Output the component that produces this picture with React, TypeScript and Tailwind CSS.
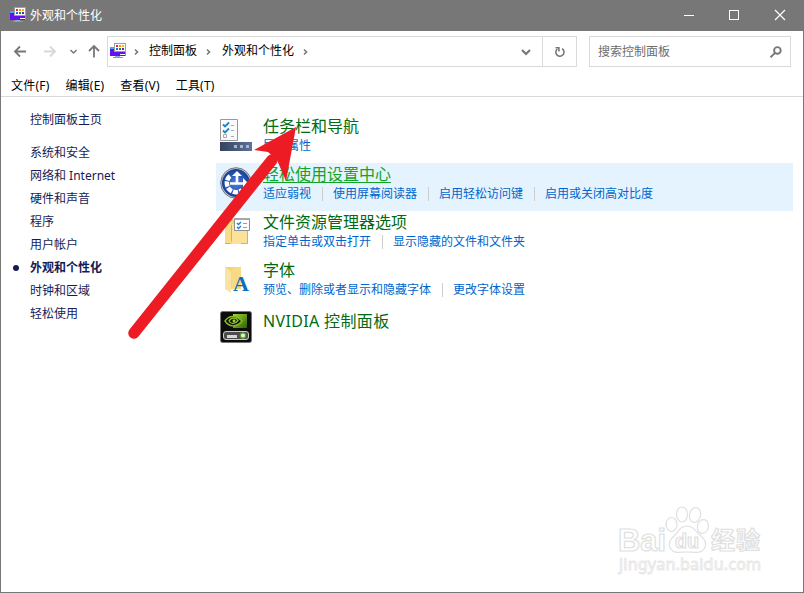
import React from 'react';

const sans = "font-['Noto_Sans','Noto_Sans_CJK_SC',sans-serif]";

function PanelIcon() {
  return (
    <svg width="16" height="16" viewBox="0 0 16 16" shapeRendering="crispEdges" className="shrink-0">
      <path d="M0 4h16v9H0z" fill="#3dabf5" />
      <path d="M0 6h3l3 3h9v4H0z" fill="#6411ee" />
      <path d="M10 11h5v1h-5z" fill="#fff" />
      <path d="M5 13h5v1H5z" fill="#7fb6dc" />
      <path d="M3 14h10v1H3z" fill="#8b9aa8" />
      <path d="M4 0h12v9H4z" fill="#a0a0a0" />
      <path d="M5 1h10v7H5z" fill="#fff" />
      <path d="M6 2h2v2H6z" fill="#f1262f" />
      <path d="M9 2h2v2H9z" fill="#ff8d00" />
      <path d="M12 2h2v2h-2z" fill="#efb900" />
      <path d="M6 5h2v2H6z" fill="#1679d4" />
      <path d="M9 5h2v2H9z" fill="#178d37" />
      <path d="M12 5h2v2h-2z" fill="#7318c9" />
    </svg>
  );
}

function Chevron({ down = false, size = 6, width = 1.6 }: { down?: boolean; size?: number; width?: number }) {
  return (
    <svg width={size} height={size} viewBox="0 0 6 6" fill="none" stroke="#777" strokeWidth={width} className="shrink-0 overflow-visible">
      <path d={down ? 'M0 1.5 3 4.5 6 1.5' : 'M1 0.5 3.5 3 1 5.5'} />
    </svg>
  );
}

function TitleBar() {
  return (
    <header className="flex h-[30px] items-center bg-[#777] pl-[9px] text-white">
      <span className="-mt-[2px]"><PanelIcon /></span>
      <h1 className="ml-[4px] grow text-[12px] leading-[18px]">外观和个性化</h1>
      <svg width="120" height="30" viewBox="0 0 120 30" fill="none" stroke="#fff" strokeWidth="1">
        <path d="M1 14.5h10M46.5 9.5h9v9h-9z" shapeRendering="crispEdges" />
        <path d="m92 9 10 10m0-10-10 10" strokeWidth="1.200" />
      </svg>
    </header>
  );
}

function Toolbar() {
  return (
    <div className="flex h-[41px] items-center text-[12px] leading-[18px]">
      <svg width="106" height="41" viewBox="0 0 106 41" fill="none" stroke="#777" strokeWidth="1.8">
        <path d="M25 20.500H14m5-5-5 5 5 5" />
        <path d="M43 20.500h11m-5-5 5 5-5 5" stroke="#d8d8d8" />
        <path d="m69.500 19 3 3 3-3" strokeWidth="1.500" />
        <path d="M93 26.500V15m-5 5 5-5 5 5" />
      </svg>
      <div className="flex h-[31px] w-[470px] items-center border border-[#d9d9d9] pl-[2px]">
        <span className="-mt-[2px]"><PanelIcon /></span>
        <span className="ml-[8px] flex"><Chevron /></span>
        <span className="ml-[9px] mt-[-2px] w-[48px] whitespace-nowrap">控制面板</span>
        <span className="ml-[9px] flex"><Chevron /></span>
        <span className="ml-[10px] mt-[-2px] w-[72px] whitespace-nowrap">外观和个性化</span>
        <span className="ml-[9px] flex grow"><Chevron /></span>
        <span className="mr-[12px] flex"><Chevron down size={8} width={1.6} /></span>
        <button className="flex h-[29px] w-[34px] items-center justify-center border-l border-[#d9d9d9]">
          <svg width="12" height="12" viewBox="0 0 12 12" fill="none" stroke="#777" strokeWidth="1.600">
            <path d="M8 2.600A4.100 4.100 0 1 1 3.300 3" />
            <path d="M1.500 1.800h3.400V5.500" />
          </svg>
        </button>
      </div>
      <div className="ml-[12px] flex h-[31px] w-[202px] items-center justify-between border border-[#d9d9d9] pl-[8px] pr-[8px] text-[#6d6d6d]">
        搜索控制面板
        <svg width="12" height="12" viewBox="0 0 12 12" fill="none" stroke="#777" strokeWidth="1.900">
          <circle cx="7.400" cy="4.400" r="3.300" />
          <path d="M5 6.800.5 11.300" />
        </svg>
      </div>
    </div>
  );
}

const menus = ['文件(F)', '编辑(E)', '查看(V)', '工具(T)'];

function MenuBar() {
  return (
    <nav className="flex h-[25px] gap-[16px] border-b border-[#d9d9d9] pl-[10px] pt-[5px] text-[12px] leading-[18px] tracking-[0.2px]">
      {menus.map((m) => (
        <span key={m} className="whitespace-nowrap">{m}</span>
      ))}
    </nav>
  );
}

const categories = ['系统和安全', '网络和 Internet', '硬件和声音', '程序', '用户帐户', '外观和个性化', '时钟和区域', '轻松使用'];

function Sidebar() {
  return (
    <aside className="w-[215px] pt-[11px] text-[12px] leading-[23px] text-[#151c55]">
      <div className="mb-[10px] pl-[29px]">控制面板主页</div>
      {categories.map((c) => {
        const current = c === '外观和个性化';
        return (
          <div key={c} className={current ? 'flex items-center font-bold' : 'pl-[29px]'}>
            {current && <span className="ml-[12px] mr-[11px] size-[6px] rounded-full bg-[#151c55]" />}
            {c}
          </div>
        );
      })}
    </aside>
  );
}

function TaskbarIcon() {
  return (
    <svg width="32" height="32" viewBox="0 0 32 32">
      <defs><linearGradient id="bar" x2="1" y2="0"><stop stopColor="#34425d" /><stop offset="1" stopColor="#5f719a" /></linearGradient></defs>
      <path d="M.5.5h17v21H.5z" fill="#fafafa" stroke="#999" />
      <path d="m3 5.500 2 2 4-4M3 11.500l2 2 4-4" fill="none" stroke="#1686ce" strokeWidth="1.800" />
      <path d="M3.500 15.500h3v3h-3zM11 6.500h3M11 11.500h3M11 17.500h3" fill="none" stroke="#aaa" />
      <path d="M0 23h32v9H0z" fill="url(#bar)" />
      <path d="M14 26h3v3h-3zM20 26h3v3h-3zM26 26h3v3h-3z" fill="#a9b4c8" />
    </svg>
  );
}

function AccessIcon() {
  return (
    <svg width="32" height="32" viewBox="0 0 32 32">
      <defs><radialGradient id="disc"><stop stopColor="#4f84dc" /><stop offset="1" stopColor="#173f9a" /></radialGradient></defs>
      <circle cx="16" cy="16" r="15.300" fill="#c5cbd5" stroke="#73777f" />
      <circle cx="16" cy="16" r="13.600" fill="url(#disc)" stroke="#20438f" />
      <path d="M10 9a9 9 0 1 0 12 14" fill="none" stroke="#fff" strokeWidth="4.500" strokeDasharray="5.200 1.200" />
      <path d="M17 7v10M10 16.500h14" fill="none" stroke="#fff" strokeWidth="2.600" />
      <path d="m12 9 5-5 5 5zM23 11l5 5-5 5z" fill="#fff" />
    </svg>
  );
}

function OptionsIcon() {
  return (
    <svg width="32" height="32" viewBox="0 0 32 32">
      <path d="M5 3h7l2 2h14v24H5z" fill="#f0d079" />
      <path d="M5 4h6v25H5z" fill="#f8dc88" />
      <path d="M12 9h15v20H12z" fill="#fbe19a" />
      <path d="M11.500 10v16M27.500 10v18.500H21M5 28.500h5" fill="none" stroke="#d8b250" />
      <path d="M14.500 3.500h15v12h-15z" fill="#fff" stroke="#8b8f91" />
      <path d="M14 3h16v2H14z" fill="#a3a8aa" />
      <path d="m17 8 1.500 1.500L21 7m-4 5 1.500 1.500L21 11" fill="none" stroke="#237dcc" strokeWidth="1.300" />
      <path d="M23 8.500h4M23 12.500h4" stroke="#999" />
    </svg>
  );
}

function FontIcon() {
  return (
    <svg width="32" height="32" viewBox="0 0 32 32" className="overflow-visible">
      <path d="M5 4h16v22H10z" fill="#f4d47c" />
      <path d="M11 8 15 4h6v22h-9z" fill="#f9da84" />
      <path d="m5 4 6 5v21l-6-4z" fill="#fbe4a3" />
      <text x="13" y="28" fontFamily="Liberation Serif" fontWeight="bold" fontSize="22" fill="#0872bd">A</text>
    </svg>
  );
}

function NvidiaIcon() {
  return (
    <svg width="32" height="32" viewBox="0 0 32 32">
      <defs><linearGradient id="eye" x2="1" y2="1"><stop stopColor="#a5d936" /><stop offset="1" stopColor="#2c6000" /></linearGradient></defs>
      <rect x=".5" y=".5" width="31" height="31" rx="2" fill="#0b0c0b" stroke="#777" />
      <path d="M13 3h14v14H13z" fill="url(#eye)" />
      <path d="M5 10c4-6 11-6 17 0-6 7-13 6-17 0Z" fill="#0b0c0b" stroke="#88bc24" strokeWidth="1.400" />
      <path d="M9 10c2-4 7-4 9-.5-3 4-7 4-9 .5Z" fill="none" stroke="#88bc24" strokeWidth="1.400" />
      <circle cx="14" cy="9.800" r="1.500" fill="#9bd22b" />
      <rect x="3.500" y="20.500" width="25" height="8" rx="2.500" fill="#4a4d4a" stroke="#cecece" />
      <path d="M7 24h10v3H7z" fill="#d6d6d6" />
      <circle cx="23" cy="24.500" r="2.700" fill="#e3efd9" stroke="#5c9a22" strokeWidth="1.300" />
    </svg>
  );
}

interface Entry {
  title: string;
  links: string[];
  icon: React.ReactNode;
  active?: boolean;
}

const entries: Entry[] = [
  { title: '任务栏和导航', links: ['导航属性'], icon: <TaskbarIcon /> },
  { title: '轻松使用设置中心', links: ['适应弱视', '使用屏幕阅读器', '启用轻松访问键', '启用或关闭高对比度'], icon: <AccessIcon />, active: true },
  { title: '文件资源管理器选项', links: ['指定单击或双击打开', '显示隐藏的文件和文件夹'], icon: <OptionsIcon /> },
  { title: '字体', links: ['预览、删除或者显示和隐藏字体', '更改字体设置'], icon: <FontIcon /> },
  { title: 'NVIDIA 控制面板', links: [], icon: <NvidiaIcon /> },
];

function EntryRow({ title, links, icon, active }: Entry) {
  return (
    <section className={`flex h-[48px] w-[577px] pl-[4px] pt-[4px] ${active ? 'bg-[#e5f3ff]' : ''}`}>
      <span className="w-[43px] shrink-0">{icon}</span>
      <div className={links.length ? '-mt-[4px]' : '-mt-[1px] tracking-[0.35px]'}>
        <h2 className={`whitespace-nowrap text-[16px] leading-[22px] ${active ? 'text-[#10a526] underline decoration-1 underline-offset-2' : 'text-[#006b12]'}`}>{title}</h2>
        <div className="flex text-[12px] leading-[18px] text-[#0066cc]">
          {links.map((link, i) => (
            <React.Fragment key={link}>
              {i > 0 && <i className="ml-[11px] mr-[10px] mt-[2px] h-[14px] w-px bg-[#ccc]" />}
              <span className="whitespace-nowrap">{link}</span>
            </React.Fragment>
          ))}
        </div>
      </div>
    </section>
  );
}

function Watermark() {
  return (
    <svg className="absolute left-[609px] top-[499px]" width="165" height="80" viewBox="0 0 165 80" fill="#fff" stroke="#e0e0e0" strokeWidth="1.200">
      <g fontFamily="Liberation Sans, Noto Sans CJK SC, sans-serif" fontWeight="bold">
        <text x="8" y="51" fontSize="32" textLength="48" lengthAdjust="spacingAndGlyphs">Bai</text>
        <ellipse cx="61.500" cy="24.500" rx="5.500" ry="7" />
        <ellipse cx="72" cy="14.500" rx="5.500" ry="7.500" />
        <ellipse cx="85" cy="15" rx="5.500" ry="7.500" transform="rotate(12 85 15)" />
        <ellipse cx="93" cy="26.500" rx="5.500" ry="7" transform="rotate(12 93 26)" />
        <path d="M77 26c-7 0-8 5-12 9-6 5-7 10-4 14 3 5 9 3 16 3s14 2 17-3c3-4 2-9-4-14-5-4-6-9-13-9Z" />
        <text x="65" y="48" fontSize="20" textLength="24" lengthAdjust="spacingAndGlyphs">du</text>
        <text x="101" y="49" fontSize="24" textLength="49">经验</text>
      </g>
      <text x="9" y="70" fontFamily="Noto Sans" fontSize="16" textLength="142" stroke="#e6e6e6" strokeWidth=".9">jingyan.baidu.com</text>
    </svg>
  );
}

export default function App() {
  return (
    <div className={`relative flex h-[593px] w-[804px] flex-col overflow-hidden border border-[#777] bg-white text-black ${sans}`}>
      <TitleBar />
      <Toolbar />
      <MenuBar />
      <div className="flex grow">
        <Sidebar />
        <main className="pt-[18px]">
          {entries.map((entry) => <EntryRow key={entry.title} {...entry} />)}
        </main>
      </div>
      <Watermark />
      <svg className="pointer-events-none absolute -left-px -top-px" width="804" height="593" viewBox="0 0 804 593">
        <path d="M134 333 272 160" stroke="#ed1c24" strokeWidth="11.500" strokeLinecap="round" />
        <path d="m296 127-42 23 14 2 9 8 9 21Z" fill="#ed1c24" />
      </svg>
    </div>
  );
}
